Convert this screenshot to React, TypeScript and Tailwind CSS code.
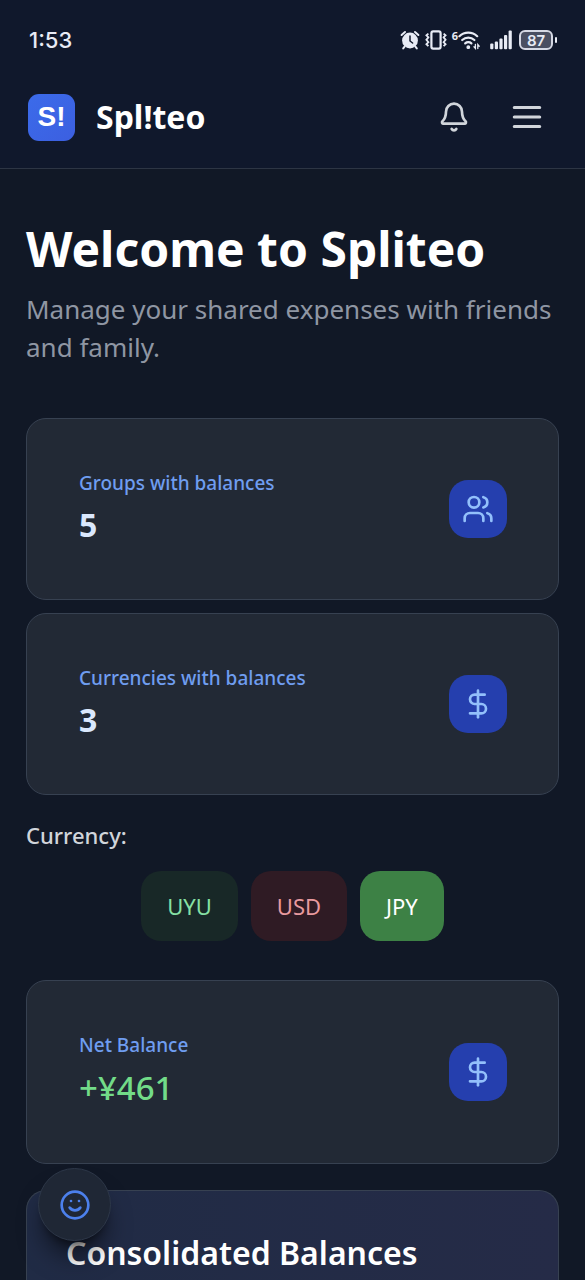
import type { ReactNode } from "react";
import { Bell, DollarSign, Smile, Users } from "lucide-react";

function AlarmIcon() {
  return (
    <svg viewBox="0 0 20 20" className="size-5" fill="none" aria-hidden="true">
      <circle cx="10" cy="10.5" r="7.9" fill="#e8ebf5" />
      <path d="M1.6 5 5 2M18.4 5 15 2" stroke="#e8ebf5" strokeWidth="2" strokeLinecap="round" />
      <path d="m4.6 16.6-1.4 1.8M15.4 16.6l1.4 1.8" stroke="#e8ebf5" strokeWidth="2" strokeLinecap="round" />
      <path d="M10 6v5l2.6 2" stroke="#10182c" strokeWidth="1.5" strokeLinecap="round" />
    </svg>
  );
}

function VibrateIcon() {
  return (
    <svg viewBox="0 0 24 20" className="h-5 w-6" fill="none" stroke="#e8ebf5" aria-hidden="true">
      <rect x="7.4" y="1.4" width="9.2" height="17.2" rx="1.8" strokeWidth="2.2" />
      <path d="M4.4 3.6 2.4 5.4l2 2-2 2.4 2 2.4-2 2 2 2M19.6 3.6l2 1.8-2 2 2 2.4-2 2.4 2 2-2 2" strokeWidth="1.8" />
    </svg>
  );
}

function WifiIcon() {
  return (
    <svg viewBox="0 0 22 20" className="h-5 w-[22px]" fill="none" stroke="#e8ebf5" strokeWidth="2.2" strokeLinecap="round" aria-hidden="true">
      <path d="M1.4 6.2a13 13 0 0 1 17.8 0" />
      <path d="M4.2 10a9 9 0 0 1 12.2 0" />
      <path d="M7.2 13.4a4.6 4.6 0 0 1 6.2 0" />
      <circle cx="10.3" cy="17.2" r="1.3" fill="#e8ebf5" strokeWidth="1.2" />
      <path d="M17.4 14.4v4l-1.4-1.6M19.8 18.6v-4l1.4 1.6" strokeWidth="1.3" />
    </svg>
  );
}

function SignalIcon() {
  return (
    <svg viewBox="0 0 22 20" className="h-5 w-[22px]" fill="#e8ebf5" aria-hidden="true">
      <rect x="0.2" y="13.6" width="3.2" height="5.6" rx="1" />
      <rect x="4.8" y="11.4" width="3.2" height="7.8" rx="1" />
      <rect x="9.4" y="8.6" width="3.2" height="10.6" rx="1" />
      <rect x="14" y="5" width="3.2" height="14.2" rx="1" />
      <rect x="18.6" y="0.6" width="3.2" height="18.6" rx="1" />
    </svg>
  );
}

function MenuIcon() {
  return (
    <svg viewBox="0 0 24 24" className="size-[38px]" fill="none" stroke="currentColor" strokeWidth="2" strokeLinecap="round" aria-hidden="true">
      <path d="M4 6h16M4 12h16M4 18h16" />
    </svg>
  );
}

function StatusBar() {
  return (
    <div className="flex h-[66px] items-center justify-between pt-3.5 pr-7 pl-[29px] text-[#e8ebf5]">
      <span className="font-['Inter'] text-[22px] font-medium">1:53</span>
      <div className="flex items-center">
        <AlarmIcon />
        <span className="pl-1">
          <VibrateIcon />
        </span>
        <div className="flex items-center pl-1">
          <span className="self-start text-[11px] leading-none font-bold">6</span>
          <WifiIcon />
        </div>
        <span className="pl-2.5">
          <SignalIcon />
        </span>
        <div className="flex items-center gap-0.5 pl-[7px]">
          <span className="flex h-5 w-[34px] items-center justify-center rounded-md border-2 border-[#d5d8e4] bg-[#4a4f62] font-['Inter'] text-[15px] leading-none font-semibold">
            87
          </span>
          <span className="h-1.5 w-0.5 rounded-sm bg-[#e8ebf5]" />
        </div>
      </div>
    </div>
  );
}

type StatCardProps = {
  label: string;
  icon: ReactNode;
  children: ReactNode;
};

function StatCard({ label, icon, children }: StatCardProps) {
  return (
    <section className="flex items-center justify-between rounded-[20px] border border-[#374151] bg-[#222935] py-[52px] pr-[51px] pl-[52px]">
      <div className="flex flex-col gap-[7px]">
        <h2 className="text-[19px] leading-6 font-medium text-[#6f9df0]">{label}</h2>
        {children}
      </div>
      <div className="flex size-[58px] items-center justify-center rounded-[19px] bg-[#253fae] text-[#93c0fb]">{icon}</div>
    </section>
  );
}

const currencies = [
  { code: "UYU", style: "bg-[#182827] text-[#86e0a4]" },
  { code: "USD", style: "bg-[#2f1b24] text-[#e89a9f]" },
  { code: "JPY", style: "bg-[#3d8145] text-white" },
];

export default function App() {
  return (
    <div className="flex min-h-screen flex-col bg-[#111826] font-['Noto_Sans',sans-serif]">
      <header className="border-b border-[#2d3544] bg-[#10182c]">
        <StatusBar />
        <div className="flex h-[102px] items-center justify-between pr-[39px] pl-7">
          <a href="#" className="flex items-center gap-[21px]">
            <span className="flex size-[47px] items-center justify-center rounded-[11px] bg-linear-to-br from-[#3b6bea] to-[#3c5fe0] font-['Liberation_Sans',sans-serif] text-[28px] leading-none font-bold text-white">
              S!
            </span>
            <span className="text-[32px] font-bold text-white">Spl!teo</span>
          </a>
          <div className="flex items-center gap-[38px] text-[#d1d5db]">
            <button type="button" aria-label="Notifications">
              <Bell className="size-8" />
            </button>
            <button type="button" aria-label="Menu">
              <MenuIcon />
            </button>
          </div>
        </div>
      </header>

      <main className="flex flex-1 flex-col px-[26px] pt-[51px]">
        <h1 className="text-[48px] leading-[58px] font-bold text-white">Welcome to Spliteo</h1>
        <p className="mt-3 text-[26px] leading-[38px] text-[#8f96a3]">
          Manage your shared expenses with friends and family.
        </p>

        <div className="mt-[52px] flex flex-col gap-[13px]">
          <StatCard label="Groups with balances" icon={<Users className="size-8" />}>
            <p className="text-[32px] leading-[45px] font-bold text-[#dbe8fd]">5</p>
          </StatCard>
          <StatCard label="Currencies with balances" icon={<DollarSign className="size-8" />}>
            <p className="text-[32px] leading-[45px] font-bold text-[#dbe8fd]">3</p>
          </StatCard>
        </div>

        <div className="mt-6 mb-[39px] flex flex-col gap-5">
          <p className="text-[22px] leading-8 font-medium text-[#d1d5db]">Currency:</p>
          <div className="flex justify-center gap-[13px]">
            {currencies.map(({ code, style }) => (
              <button key={code} type="button" className={`h-[70px] rounded-[20px] px-[26px] text-[22px] ${style}`}>
                {code}
              </button>
            ))}
          </div>
        </div>

        <StatCard label="Net Balance" icon={<DollarSign className="size-8" />}>
          <p className="text-[33px] leading-[47px] font-medium text-[#72db88]">+¥461</p>
        </StatCard>

        <section className="mt-[26px] flex-1 rounded-t-[20px] border border-b-0 border-[#374151] bg-linear-to-r from-[#202b45] to-[#252b47] px-[39px] pt-[39px]">
          <h2 className="text-[32px] leading-[45px] font-semibold text-white">Consolidated Balances</h2>
        </section>
      </main>

      <button
        type="button"
        aria-label="Send feedback"
        className="fixed bottom-[39px] left-[38px] flex size-[73px] items-center justify-center rounded-full border border-[#2d3748] bg-[#1f2735] text-[#4c80ec] shadow-xl shadow-black/50"
      >
        <Smile className="size-8" />
      </button>
    </div>
  );
}
